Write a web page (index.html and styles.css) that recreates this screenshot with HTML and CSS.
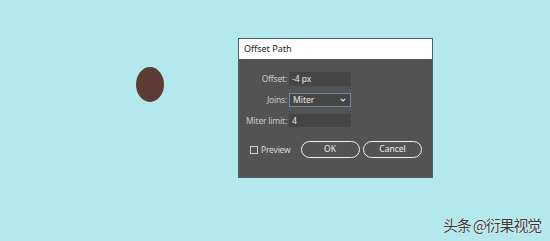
FILE: index.html
```html
<!DOCTYPE html>
<html lang="zh">
<head>
  <meta charset="UTF-8" />
  <title>Offset Path</title>
  <link rel="stylesheet" href="styles.css">
</head>
<body>
  <div class="stage">
    <div class="shape"></div>

    <div class="dialog">
      <div class="dialog-title">Offset Path</div>
      <div class="dialog-body">
        <div class="form">
          <label>Offset:</label>
          <div class="field">-4 px</div>
          <label>Joins:</label>
          <div class="field select">Miter
            <svg class="chevron" width="6" height="4" viewBox="0 0 6 4"><path d="M0.8 0.8 L3 3 L5.2 0.8" fill="none" stroke="#e6e6e6" stroke-width="1.2"/></svg>
          </div>
          <label>Miter limit:</label>
          <div class="field">4</div>
        </div>

        <div class="actions">
          <div class="check"><span class="box"></span>Preview</div>
          <div class="btn">OK</div>
          <div class="btn">Cancel</div>
        </div>
      </div>
    </div>
  </div>

  <div class="watermark">头条 @衍果视觉</div>
</body>
</html>
```

FILE: styles.css
```css
body {
  margin: 0;
  width: 550px;
  height: 241px;
  overflow: hidden;
  background-color: #b3e9ec;
  font-family: "Noto Sans", "Liberation Sans", sans-serif;
}
.stage {
  display: flex;
  align-items: flex-start;
  box-sizing: border-box;
  padding: 38px 0 0 136px;
  height: 215px;
}
.shape {
  width: 28px;
  height: 35px;
  margin-top: 29px;
  margin-right: 74px;
  border-radius: 50%;
  background-color: #5d3a34;
}
.dialog {
  width: 193px;
  border: 1px solid #47606a;
  background-color: #535353;
}
.dialog-title {
  height: 20px;
  line-height: 19px;
  padding-left: 5px;
  background-color: #fff;
  color: #222;
  font-size: 9px;
}
.dialog-body {
  padding: 13px 0 19px 0;
}
.form {
  display: grid;
  grid-template-columns: 48px 62px;
  column-gap: 2px;
  row-gap: 7px;
  align-items: center;
}
.form label {
  text-align: right;
  color: #c9c9c9;
  font-size: 8.5px;
  letter-spacing: -0.2px;
}
.field {
  height: 13.5px;
  line-height: 13.5px;
  padding-left: 3px;
  background-color: #454545;
  color: #e8e8e8;
  font-size: 8.5px;
  box-sizing: border-box;
}
.select {
  display: flex;
  justify-content: space-between;
  align-items: center;
  border: 1px solid #6a88a6;
  padding-right: 4px;
  height: 14px;
  line-height: 12px;
}
.actions {
  display: flex;
  align-items: center;
  margin-top: 14px;
  padding-left: 11px;
}
.check {
  display: flex;
  align-items: center;
  gap: 3px;
  color: #d8d8d8;
  font-size: 8.5px;
  margin-right: 10px;
  letter-spacing: -0.2px;
}
.box {
  width: 6px;
  height: 6px;
  border: 1px solid #cfcfcf;
}
.btn {
  width: 59px;
  height: 17px;
  box-sizing: border-box;
  border: 1.5px solid #f2f2f2;
  border-radius: 9px;
  text-align: center;
  line-height: 14px;
  color: #eee;
  font-size: 8.5px;
  margin-right: 3.5px;
}
.watermark {
  text-align: right;
  padding-right: 9px;
  font-family: "Noto Sans CJK SC", sans-serif;
  font-size: 15px;
  line-height: 20px;
  letter-spacing: -1.2px;
  color: #3a3a3a;
  text-shadow: 0 0 1px #fff, 0 0 1px #fff;
}
```
